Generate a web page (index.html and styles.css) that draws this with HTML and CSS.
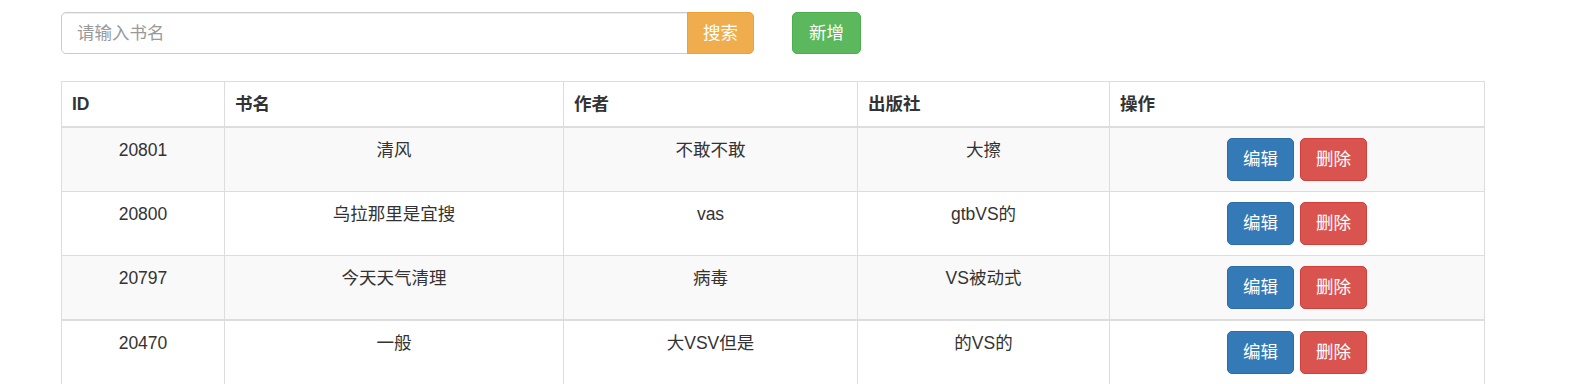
FILE: index.html
```html
<!DOCTYPE html>
<html lang="zh-CN">
<head>
  <meta charset="UTF-8">
  <meta name="viewport" content="width=device-width, initial-scale=1.0">
  <title>图书管理</title>
  <link rel="stylesheet" href="styles.css">
</head>
<body>
  <div class="container">
    <div class="toolbar">
      <div class="search-group">
        <input type="text" class="search-input" placeholder="请输入书名">
        <button class="btn btn-warning btn-attached">搜索</button>
      </div>
      <button class="btn btn-success">新增</button>
    </div>

    <table class="book-table">
      <thead>
        <tr>
          <th class="col-id">ID</th>
          <th class="col-name">书名</th>
          <th class="col-author">作者</th>
          <th class="col-press">出版社</th>
          <th>操作</th>
        </tr>
      </thead>
      <tbody>
        <tr>
          <td>20801</td>
          <td>清风</td>
          <td>不敢不敢</td>
          <td>大擦</td>
          <td><button class="btn btn-primary">编辑</button> <button class="btn btn-danger">删除</button></td>
        </tr>
        <tr>
          <td>20800</td>
          <td>乌拉那里是宜搜</td>
          <td>vas</td>
          <td>gtbVS的</td>
          <td><button class="btn btn-primary">编辑</button> <button class="btn btn-danger">删除</button></td>
        </tr>
        <tr class="row-short">
          <td>20797</td>
          <td>今天天气清理</td>
          <td>病毒</td>
          <td>VS被动式</td>
          <td><button class="btn btn-primary">编辑</button> <button class="btn btn-danger">删除</button></td>
        </tr>
        <tr class="row-split">
          <td>20470</td>
          <td>一般</td>
          <td>大VSV但是</td>
          <td>的VS的</td>
          <td><button class="btn btn-primary">编辑</button> <button class="btn btn-danger">删除</button></td>
        </tr>
      </tbody>
    </table>
  </div>
</body>
</html>
```

FILE: styles.css
```css
body {
  margin: 0;
  font-family: "Liberation Sans", "Noto Sans CJK SC", sans-serif;
  font-size: 17.5px;
  line-height: 25px;
  color: #333;
  background: #fff;
}
.container {
  padding: 12px 0 0 61px;
}
.toolbar {
  display: flex;
  align-items: center;
  gap: 38px;
}
.search-group {
  display: flex;
}
.search-input {
  width: 627px;
  height: 42px;
  box-sizing: border-box;
  padding: 8px 15px;
  font-family: inherit;
  font-size: 17.5px;
  color: #555;
  border: 1px solid #ccc;
  border-radius: 5px 0 0 5px;
  box-shadow: inset 0 1px 1px rgba(0, 0, 0, 0.075);
  outline: none;
}
.search-input::placeholder {
  color: #999;
}
.btn {
  display: inline-block;
  box-sizing: border-box;
  height: 43px;
  padding: 8px 15px;
  font-family: inherit;
  font-size: 17.5px;
  line-height: 25px;
  color: #fff;
  border: 1px solid transparent;
  border-radius: 5px;
  cursor: pointer;
  vertical-align: top;
}
.btn-attached {
  height: 42px;
  padding: 7px 15px;
  border-radius: 0 5px 5px 0;
  margin-left: -1px;
}
.btn-warning {
  background: #f0ad4e;
  border-color: #eea236;
}
.btn-success {
  height: 42px;
  padding: 7px 16px;
  background: #5cb85c;
  border-color: #4cae4c;
}
.btn-primary {
  background: #337ab7;
  border-color: #2e6da4;
}
.btn-danger {
  margin-left: 1px;
  background: #d9534f;
  border-color: #d43f3a;
}
.book-table {
  width: 1424px;
  margin-top: 27px;
  border-collapse: collapse;
  border: 1px solid #ddd;
}
.book-table th,
.book-table td {
  padding: 10px;
  border: 1px solid #ddd;
  vertical-align: top;
}
.book-table th {
  padding-bottom: 9px;
  text-align: left;
  font-weight: bold;
  border-bottom: 2px solid #ddd;
}
.book-table td {
  height: 43px;
  text-align: center;
}
.book-table tbody tr:nth-child(odd) {
  background: #f9f9f9;
}
.book-table .row-short td {
  height: 42px;
}
.book-table .row-split td {
  border-top: 2px solid #ddd;
}
.col-id { width: 142px; }
.col-name { width: 318px; }
.col-author { width: 273px; }
.col-press { width: 231px; }
```
